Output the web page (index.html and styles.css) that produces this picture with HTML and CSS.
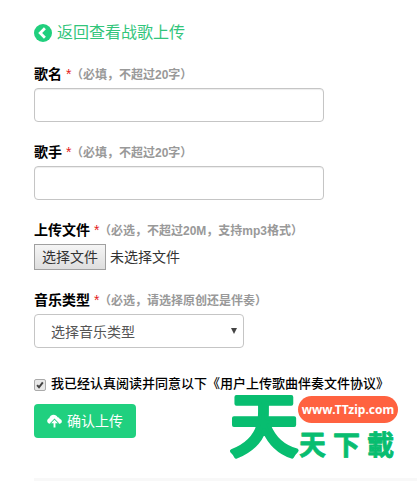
FILE: index.html
```html
<!DOCTYPE html>
<html lang="zh-CN">
<head>
<meta charset="utf-8">
<title>战歌上传</title>
<link rel="stylesheet" href="styles.css">
</head>
<body>
<main class="page">
  <a class="back">
    <svg class="back-icon" viewBox="0 0 18 18"><circle cx="9" cy="9" r="9"/><path d="M10.9 4.3 6.2 9l4.7 4.7"/></svg>
    <span>返回查看战歌上传</span>
  </a>
  <form class="form">
    <div class="field">
      <div class="label"><b>歌名</b><i>*</i><small>（必填，不超过20字）</small></div>
      <div class="input"></div>
    </div>
    <div class="field">
      <div class="label"><b>歌手</b><i>*</i><small>（必填，不超过20字）</small></div>
      <div class="input"></div>
    </div>
    <div class="field field-file">
      <div class="label"><b>上传文件</b><i>*</i><small>（必选，不超过20M，支持mp3格式）</small></div>
      <div class="file"><span class="file-button">选择文件</span><span>未选择文件</span></div>
    </div>
    <div class="field field-type">
      <div class="label"><b>音乐类型</b><i>*</i><small>（必选，请选择原创还是伴奏）</small></div>
      <div class="select"><span>选择音乐类型</span><svg class="arrow" viewBox="0 0 6 6"><path d="M0 0h6L3 6z"/></svg></div>
    </div>
    <div class="agree">
      <span class="check"><svg viewBox="0 0 12 12"><path d="M2.5 6.2 4.8 8.7 9.4 2.8"/></svg></span>
      <span>我已经认真阅读并同意以下《用户上传歌曲伴奏文件协议》</span>
    </div>
    <div class="submit">
      <svg viewBox="0 0 16 14"><path class="cloud" d="M3.4 9.8C1.6 9.8.2 8.6.2 6.9c0-1.5 1-2.5 2.2-2.8C2.7 1.8 4.7.2 7 .2c2 0 3.6 1.1 4.3 2.8 1.1-.1 2.1.8 2.2 1.9 1.4.3 2.3 1.2 2.3 2.5 0 1.4-1.1 2.4-2.5 2.4z"/><path class="gap" d="M8 4.4 3.4 9v1.5h3V14h3.2v-3.5h3V9z"/><path class="cloud" d="M8 5.6 4.4 9.4h2.6v4.4h2V9.4h2.6z"/></svg>
      <span>确认上传</span>
    </div>
  </form>
  <div class="divider"></div>
</main>
<div class="watermark">
  <svg class="mark-large" viewBox="0 0 70 72"><text x="0.5" y="62">天</text></svg>
  <div class="mark-side">
    <span class="mark-url">www.TTzip.com</span>
    <svg class="mark-small" viewBox="0 0 100 32"><text x="0" y="26">天下載</text></svg>
  </div>
</div>
</body>
</html>
```
FILE: styles.css
```css
* { box-sizing: border-box; }
body {
  margin: 0;
  height: 481px;
  overflow: hidden;
  background: #fff;
  color: #333;
  font: 14px/20px "Liberation Sans", "Noto Sans CJK SC", sans-serif;
  white-space: nowrap;
}
.page {
  display: flex;
  flex-direction: column;
  height: 481px;
  padding: 22px 0 0 34px;
}
.back {
  display: flex;
  align-items: center;
  gap: 5px;
  height: 22px;
  margin-bottom: 20px;
  color: #32c57b;
  font-size: 16px;
}
.back-icon { width: 18px; height: 18px; fill: #20cf7d; }
.back-icon path { fill: none; stroke: #fff; stroke-width: 2.8; }
.field { height: 78px; }
.field-file { height: 70px; }
.field-type { height: 84px; }
.label {
  display: flex;
  align-items: center;
  height: 20px;
  margin-bottom: 4px;
  color: #000;
}
.label i {
  width: 9px;
  padding-left: 4px;
  color: #e32020;
  font-style: normal;
}
.label small {
  padding-top: 2px;
  color: #999;
  font-size: 12px;
  font-weight: bold;
}
.input {
  width: 290px;
  height: 34px;
  border: 1px solid #c5c5c5;
  border-radius: 4px;
  box-shadow: inset 0 1px 1px rgba(0, 0, 0, .075);
}
.file { display: flex; align-items: center; gap: 4px; height: 26px; }
.file-button {
  width: 72px;
  height: 26px;
  border: 1px solid #a0a0a0;
  background: linear-gradient(#f5f5f5, #dedede);
  line-height: 24px;
  text-align: center;
}
.select {
  display: flex;
  align-items: center;
  justify-content: space-between;
  width: 210px;
  height: 34px;
  padding: 2px 6px 0 16px;
  border: 1px solid #c5c5c5;
  border-radius: 4px;
  color: #555;
}
.arrow { width: 6px; height: 6px; margin-top: -3px; fill: #444; }
.agree {
  display: flex;
  align-items: center;
  gap: 5px;
  height: 20px;
  margin-bottom: 10px;
  color: #000;
  font-size: 13px;
  font-weight: 500;
}
.check {
  width: 12px;
  height: 12px;
  margin-top: 1px;
  border: 1px solid #aaa;
  border-radius: 2px;
  background: #e8e8e8;
}
.check svg { display: block; width: 10px; height: 10px; }
.check path { fill: none; stroke: #444; stroke-width: 2.4; }
.submit {
  display: flex;
  align-items: center;
  gap: 5px;
  width: 102px;
  height: 34px;
  padding-left: 13px;
  border-radius: 4px;
  background: #20d07f;
  color: #fff;
}
.submit svg { width: 15px; height: 14px; }
.cloud { fill: #fff; }
.gap { fill: #20d07f; }
.divider { height: 3px; margin-top: auto; background: #f8f8f8; }
.watermark {
  position: absolute;
  left: 229px;
  top: 389px;
  display: flex;
  color: #08bd70;
  font-family: "Noto Sans CJK TC", sans-serif;
}
.watermark svg {
  display: block;
  overflow: visible;
  fill: #08bd70;
  stroke: #08bd70;
  stroke-linejoin: round;
}
.mark-large {
  width: 70px;
  height: 72px;
  font-size: 69px;
  font-weight: 500;
  stroke-width: 4px;
}
.mark-side { display: flex; flex-direction: column; padding-top: 7px; }
.mark-url {
  width: 100px;
  height: 27px;
  margin-left: -1px;
  border-radius: 14px;
  background: #ff6240;
  color: #fff;
  font: bold 12px/27px "Noto Sans", sans-serif;
  text-align: center;
}
.mark-small {
  width: 100px;
  height: 32px;
  margin-top: 6px;
  font-size: 27px;
  font-weight: 700;
  letter-spacing: 7px;
  stroke-width: .8px;
}
```
